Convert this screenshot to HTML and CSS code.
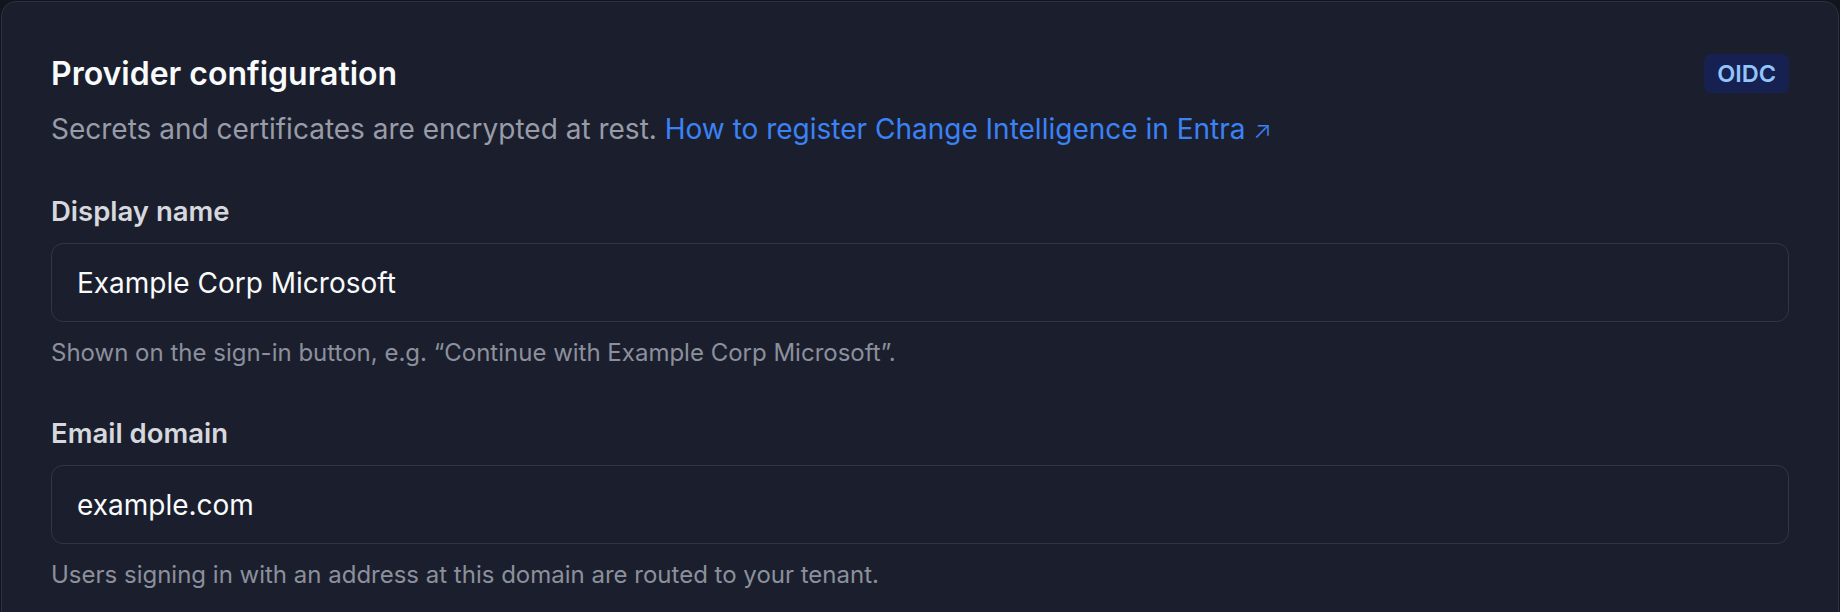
FILE: index.html
```html
<!DOCTYPE html>
<html lang="en">
<head>
<meta charset="utf-8">
<title>Provider configuration</title>
<link rel="stylesheet" href="styles.css">
</head>
<body>
  <section class="card">
    <header class="card-head">
      <div class="head-text">
        <h2 class="title">Provider configuration</h2>
        <p class="subtitle">Secrets and certificates are encrypted at rest. <a class="link" href="#">How to register Change Intelligence in Entra <span class="ext">↗</span></a></p>
      </div>
      <span class="badge">OIDC</span>
    </header>

    <div class="field">
      <label class="label" for="display-name">Display name</label>
      <input class="input" id="display-name" type="text" value="Example Corp Microsoft">
      <p class="help">Shown on the sign-in button, e.g. “Continue with Example Corp Microsoft”.</p>
    </div>

    <div class="field">
      <label class="label" for="email-domain">Email domain</label>
      <input class="input" id="email-domain" type="text" value="example.com">
      <p class="help">Users signing in with an address at this domain are routed to your tenant.</p>
    </div>
  </section>
</body>
</html>
```
FILE: styles.css
```css
* {
  box-sizing: border-box;
}

html, body {
  margin: 0;
  height: 100%;
}

body {
  background: #13151c;
  padding: 1px 1px 0;
  font-family: Inter, "Noto Sans", "Liberation Sans", sans-serif;
  overflow: hidden;
}

.card {
  background: #1b1f2d;
  border: 1px solid #2d303e;
  border-radius: 15px;
  padding: 52px 49px 0;
  height: 700px;
}

.card-head {
  display: flex;
  justify-content: space-between;
  align-items: flex-start;
  gap: 24px;
  margin-bottom: 45px;
}

.title {
  margin: 0;
  font-size: 32px;
  line-height: 40px;
  font-weight: 600;
  color: #f9fafb;
}

.subtitle {
  margin: 17px 0 0;
  font-size: 28px;
  line-height: 36px;
  color: #989ca8;
}

.link {
  color: #3b82f6;
  text-decoration: none;
}

.ext {
  font-weight: 300;
  font-size: 24px;
}

.badge {
  background: #162152;
  color: #93c5fd;
  font-size: 23.5px;
  font-weight: 600;
  line-height: 39px;
  padding: 0 13px;
  border-radius: 7px;
}

.field + .field {
  margin-top: 47px;
}

.label {
  display: block;
  font-size: 27.5px;
  line-height: 34px;
  font-weight: 600;
  color: #d6d8de;
}

.input {
  display: block;
  width: 100%;
  margin-top: 15px;
  height: 79px;
  padding: 0 25px;
  background: #1b1f2d;
  border: 1.5px solid #323644;
  border-radius: 12px;
  color: #f9fafb;
  font-family: inherit;
  font-size: 28px;
  outline: none;
}

.help {
  margin: 15px 0 0;
  font-size: 24px;
  line-height: 32px;
  color: #8b909c;
}
```
